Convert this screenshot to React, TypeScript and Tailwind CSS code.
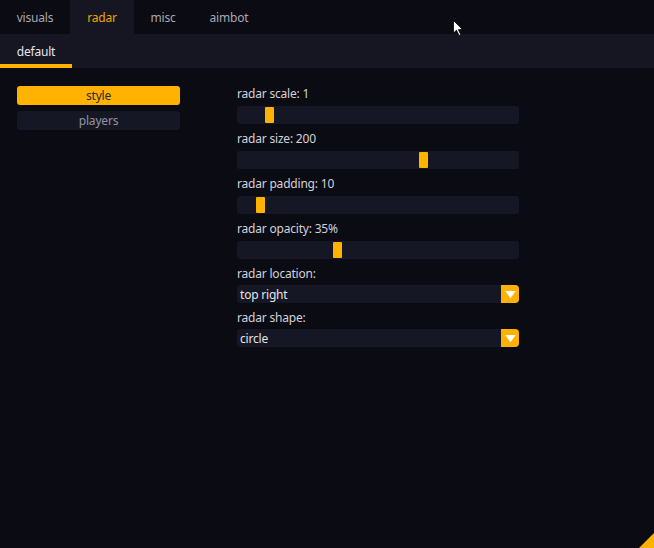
import { useState } from 'react';

const tabs = [
  { name: 'visuals', w: 'w-[70px]' },
  { name: 'radar', w: 'w-[64px]' },
  { name: 'misc', w: 'w-[58px]' },
  { name: 'aimbot', w: 'w-[74px]' },
];

const sliders = [
  { label: 'radar scale: 1', pos: 28 },
  { label: 'radar size: 200', pos: 182 },
  { label: 'radar padding: 10', pos: 19 },
  { label: 'radar opacity: 35%', pos: 96 },
];

const combos = [
  { label: 'radar location:', value: 'top right' },
  { label: 'radar shape:', value: 'circle' },
];

function Slider({ label, pos }: { label: string; pos: number }) {
  return (
    <div className="flex flex-col">
      <div className="mb-[2px] h-[20px] leading-[20px] text-[#d2d2d6]">{label}</div>
      <div className="relative h-[18px] rounded-[3px] bg-[#161724]">
        <div
          className="absolute top-[1px] bottom-[1px] w-[9px] rounded-[1px] bg-[#ffb300]"
          style={{ left: pos }}
        />
      </div>
    </div>
  );
}

function Combo({ label, value }: { label: string; value: string }) {
  return (
    <div className="flex flex-col">
      <div className="mb-[1px] h-[20px] leading-[20px] text-[#d2d2d6]">{label}</div>
      <div className="flex h-[18px] items-center rounded-[3px] bg-[#161724]">
        <span className="flex-1 pl-[3px] pt-[1px] leading-[18px] text-[#e4e4e8]">{value}</span>
        <div className="flex h-full w-[18px] items-center justify-center rounded-r-[4px] bg-[#ffb300]">
          <svg width="11" height="9" viewBox="0 0 11 9">
            <path d="M0.3 1 L10.7 1 L5.5 8.3 Z" fill="#ffffff" />
          </svg>
        </div>
      </div>
    </div>
  );
}

export default function App() {
  const [active, setActive] = useState('radar');
  const [section, setSection] = useState('style');

  return (
    <div
      className="relative h-[548px] w-[654px] overflow-hidden bg-[#0b0b14] text-[12px] tracking-[-0.2px]"
      style={{ fontFamily: '"Noto Sans", "Open Sans", sans-serif' }}
    >
      <div className="flex h-[34px]">
        {tabs.map((t) => (
          <button
            key={t.name}
            onClick={() => setActive(t.name)}
            className={`${t.w} flex h-full items-center justify-center pt-[2px] ${
              active === t.name ? 'bg-[#151622] text-[#f2a400]' : 'text-[#a9a9b0]'
            }`}
          >
            {t.name}
          </button>
        ))}
      </div>

      <div className="flex h-[34px] bg-[#151622]">
        <div className="relative flex w-[72px] items-center justify-center pt-[2px] text-[#e6e6ea]">
          default
          <div className="absolute bottom-0 left-0 right-0 h-[4px] bg-[#ffb300]" />
        </div>
      </div>

      <div className="flex pt-[16px]">
        <div className="ml-[17px] mt-[2px] flex w-[163px] flex-col gap-[6px]">
          {['style', 'players'].map((s) => (
            <button
              key={s}
              onClick={() => setSection(s)}
              className={`h-[19px] rounded-[3px] leading-[19px] ${
                section === s ? 'bg-[#ffb300] text-[#2a2a2a]' : 'bg-[#161724] text-[#9494a0]'
              }`}
            >
              {s}
            </button>
          ))}
        </div>

        <div className="ml-[57px] flex w-[282px] flex-col gap-[5px]">
          {sliders.map((s) => (
            <Slider key={s.label} {...s} />
          ))}
          {combos.map((c) => (
            <Combo key={c.label} {...c} />
          ))}
        </div>
      </div>

      <svg className="absolute right-0 bottom-0" width="16" height="16" viewBox="0 0 16 16">
        <path d="M16 1 L16 16 L1 16 Z" fill="#ffb300" />
      </svg>

      <svg className="absolute left-[453px] top-[20px]" width="12" height="18" viewBox="0 0 12 18">
        <path d="M0.5 0.5 L0.5 13 L3.5 10.2 L6 15.5 L7.8 14.7 L5.4 9.6 L9.5 9.6 Z" fill="#ffffff" stroke="#000000" strokeWidth="0.8" />
      </svg>
    </div>
  );
}
